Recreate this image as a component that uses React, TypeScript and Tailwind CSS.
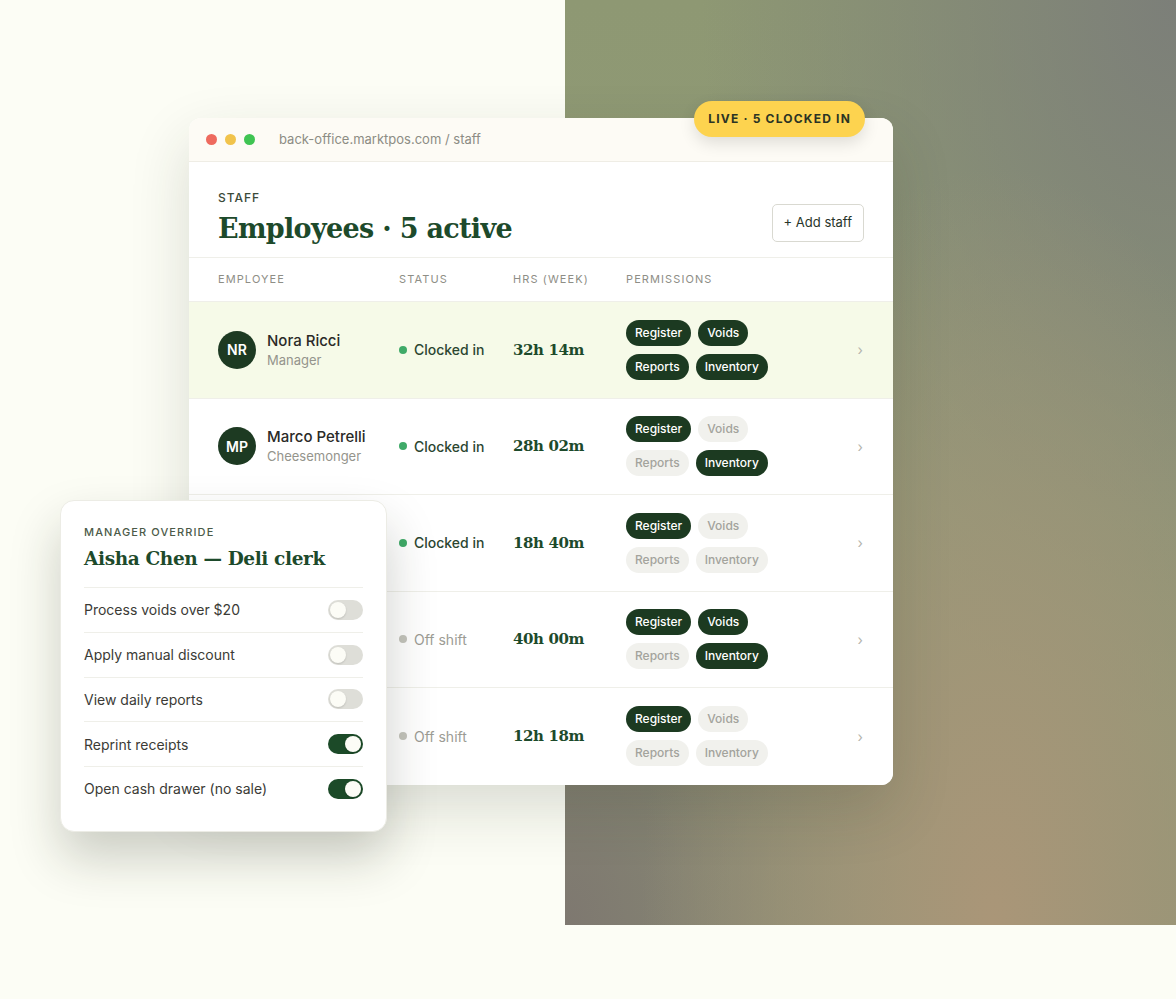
import React from 'react';

type Staff = {
    initials: string;
    name: string;
    role: string;
    clockedIn: boolean;
    hours: string;
    perms: boolean[];
    highlight?: boolean;
    covered?: boolean;
};

// rows 3-5 sit behind the override popover, so their name cells stay empty
const staff: Staff[] = [
    { initials: 'NR', name: 'Nora Ricci', role: 'Manager', clockedIn: true, hours: '32h 14m', perms: [true, true, true, true], highlight: true },
    { initials: 'MP', name: 'Marco Petrelli', role: 'Cheesemonger', clockedIn: true, hours: '28h 02m', perms: [true, false, false, true] },
    { initials: 'AC', name: 'Aisha Chen', role: 'Deli clerk', clockedIn: true, hours: '18h 40m', perms: [true, false, false, false], covered: true },
    { initials: 'JO', name: 'Jonas Okafor', role: 'Shift lead', clockedIn: false, hours: '40h 00m', perms: [true, true, false, true], covered: true },
    { initials: 'LB', name: 'Lena Brandt', role: 'Cashier', clockedIn: false, hours: '12h 18m', perms: [true, false, false, false], covered: true },
];

const overrides = [
    { label: 'Process voids over $20', on: false },
    { label: 'Apply manual discount', on: false },
    { label: 'View daily reports', on: false },
    { label: 'Reprint receipts', on: true },
    { label: 'Open cash drawer (no sale)', on: true },
];

const Pill = ({ label, on }: { label: string; on: boolean }) => (
    <span
        className={
            on
                ? 'h-[26px] px-[9px] rounded-full flex items-center text-[12px] font-medium bg-[#1c3a21] text-white'
                : 'h-[26px] px-[9px] rounded-full flex items-center text-[12px] font-medium bg-[#f1f1ed] text-[#a3a39c]'
        }
    >
        {label}
    </span>
);

const Toggle = ({ on }: { on: boolean }) => (
    <span
        className={
            on
                ? 'w-[35px] h-[20px] rounded-full bg-[#1c4a28] flex items-center justify-end px-[2px]'
                : 'w-[35px] h-[20px] rounded-full bg-[#deded8] flex items-center justify-start px-[2px]'
        }
    >
        <span className="w-[16px] h-[16px] rounded-full bg-[#fcfcf6] shadow-[0_1px_2px_rgba(0,0,0,0.15)]" />
    </span>
);

const StaffRow = ({ row, last }: { row: Staff; last: boolean }) => {
    const [register, voids, reports, inventory] = row.perms;
    return (
        <div
            className={
                'h-[96.5px] px-[29px] grid grid-cols-[181px_114px_113px_1fr_auto] items-center ' +
                (row.highlight ? 'bg-[#f6fae8] ' : 'bg-white ') +
                (last ? '' : 'border-b border-[#efefe9]')
            }
        >
            {row.covered ? (
                <div />
            ) : (
                <div className="flex items-center gap-[11px]">
                    <div className="w-[38px] h-[38px] rounded-full bg-[#1d3a22] text-white text-[14px] font-semibold flex items-center justify-center">
                        {row.initials}
                    </div>
                    <div className="flex flex-col">
                        <span className="text-[15px] font-medium text-[#2a2a27] leading-[20px]">{row.name}</span>
                        <span className="text-[13px] text-[#94948c] leading-[18px]">{row.role}</span>
                    </div>
                </div>
            )}
            <div className="flex items-center gap-[7px]">
                <span className={row.clockedIn ? 'w-[8px] h-[8px] rounded-full bg-[#3faa68]' : 'w-[8px] h-[8px] rounded-full bg-[#c4c4bc]'} />
                <span className={row.clockedIn ? 'text-[14px] font-medium text-[#2c4631]' : 'text-[14px] text-[#9c9c94]'}>
                    {row.clockedIn ? 'Clocked in' : 'Off shift'}
                </span>
            </div>
            <div className="font-['DejaVu_Serif',serif] font-bold text-[15px] tracking-[-0.4px] text-[#1d4a2b]">{row.hours}</div>
            <div className="flex flex-col gap-[8px]">
                <div className="flex gap-[7px]">
                    <Pill label="Register" on={register} />
                    <Pill label="Voids" on={voids} />
                </div>
                <div className="flex gap-[7px]">
                    <Pill label="Reports" on={reports} />
                    <Pill label="Inventory" on={inventory} />
                </div>
            </div>
            <span className="text-[14px] text-[#b4b4ac] pr-[1px]">›</span>
        </div>
    );
};

const App = () => {
    return (
        <div className="relative w-full h-[999px] bg-[#fcfdf5] font-['Inter',sans-serif] overflow-hidden">
            <div className="flex">
                <div className="w-[565px] shrink-0" />
                <div className="flex-1 h-[925px] bg-[radial-gradient(ellipse_at_70%_100%,rgba(170,150,120,1)_0%,rgba(163,149,120,0.75)_25%,rgba(150,152,120,0)_58%),radial-gradient(ellipse_at_0%_100%,rgba(126,120,112,1)_0%,rgba(126,120,112,0)_42%),radial-gradient(ellipse_at_100%_0%,rgba(124,127,121,1)_0%,rgba(124,127,121,0)_55%),linear-gradient(180deg,#8e9873_0%,#919b77_55%,#8f9676_100%)]" />
            </div>

            {/* main window */}
            <div className="absolute left-[189px] top-[118px] w-[704px] rounded-[12px] bg-white shadow-[0_24px_60px_rgba(40,45,30,0.16)]">
                <div className="h-[44px] rounded-t-[12px] bg-[#fdfbf5] border-b border-[#efede5] flex items-center pl-[17px]">
                    <div className="flex gap-[8px]">
                        <span className="w-[11px] h-[11px] rounded-full bg-[#ee6a5e]" />
                        <span className="w-[11px] h-[11px] rounded-full bg-[#f1c34b]" />
                        <span className="w-[11px] h-[11px] rounded-full bg-[#3fc452]" />
                    </div>
                    <span className="ml-[24px] text-[13px] text-[#8c8c84]">back-office.marktpos.com / staff</span>
                </div>

                <div className="absolute -top-[17px] right-[28px] h-[36px] px-[14px] rounded-full bg-[#fdd34f] flex items-center text-[12px] font-bold tracking-[0.1em] text-[#2b3424] shadow-[0_6px_16px_rgba(0,0,0,0.12)]">
                    LIVE · 5 CLOCKED IN
                </div>

                <div className="h-[95px] px-[29px] flex items-end justify-between pb-[10px]">
                    <div className="flex flex-col">
                        <span className="text-[12px] font-medium tracking-[0.08em] text-[#3b4a38] leading-[16px]">STAFF</span>
                        <span className="mt-[5px] font-['DejaVu_Serif',serif] font-bold text-[27px] tracking-[-0.025em] leading-[36px] text-[#1d4a2b]">
                            Employees · 5 active
                        </span>
                    </div>
                    <button
                        type="button"
                        className="mb-[5px] h-[38px] px-[11px] rounded-[5px] border border-[#d9d9d1] bg-white text-[13px] text-[#27352a]"
                    >
                        + Add staff
                    </button>
                </div>

                <div className="h-[45px] px-[29px] border-y border-[#efefe9] grid grid-cols-[181px_114px_113px_1fr] items-center text-[11px] tracking-[0.1em] text-[#8e8e86]">
                    <span>EMPLOYEE</span>
                    <span>STATUS</span>
                    <span>HRS (WEEK)</span>
                    <span>PERMISSIONS</span>
                </div>

                <div className="rounded-b-[12px] overflow-hidden">
                    {staff.map((row, i) => (
                        <StaffRow key={row.initials} row={row} last={i === staff.length - 1} />
                    ))}
                </div>
            </div>

            {/* override popover */}
            <div className="absolute left-[60px] top-[500px] w-[327px] rounded-[14px] bg-white border border-[#ecece5] shadow-[0_26px_50px_rgba(30,35,25,0.22)] px-[23px] pt-[23px] pb-[20px]">
                <div className="text-[11px] font-medium tracking-[0.1em] text-[#4b5a48] leading-[16px]">MANAGER OVERRIDE</div>
                <div className="mt-[5px] font-['DejaVu_Serif',serif] font-bold text-[18.5px] tracking-[-0.02em] leading-[28px] text-[#1d4a2b]">
                    Aisha Chen — Deli clerk
                </div>
                <div className="mt-[14px] flex flex-col">
                    {overrides.map((o) => (
                        <div key={o.label} className="h-[44.75px] border-t border-[#efefe9] flex items-center justify-between">
                            <span className="text-[14px] text-[#3b3b36]">{o.label}</span>
                            <Toggle on={o.on} />
                        </div>
                    ))}
                </div>
            </div>
        </div>
    );
};

export default App;
